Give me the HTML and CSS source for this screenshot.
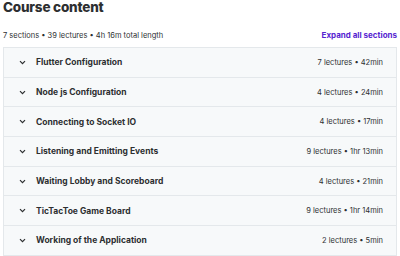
FILE: index.html
```html
<!DOCTYPE html>
<html>
<head>
<meta charset="utf-8">
<link rel="stylesheet" href="styles.css">
</head>
<body>
<div class="page">
  <h2 class="title">Course content</h2>
  <div class="meta">
    <span class="stats">7 sections • 39 lectures • 4h 16m total length</span>
    <span class="expand">Expand all sections</span>
  </div>
  <div class="list">
    <div class="row"><span class="chev"><svg width="7" height="5" viewBox="0 0 7 5"><path d="M1 1.2l2.5 2.5 2.5-2.5" fill="none" stroke="#2d2f31" stroke-width="1.2"/></svg></span><span class="name">Flutter Configuration</span><span class="info">7 lectures • 42min</span></div>
    <div class="row"><span class="chev"><svg width="7" height="5" viewBox="0 0 7 5"><path d="M1 1.2l2.5 2.5 2.5-2.5" fill="none" stroke="#2d2f31" stroke-width="1.2"/></svg></span><span class="name">Node js Configuration</span><span class="info">4 lectures • 24min</span></div>
    <div class="row"><span class="chev"><svg width="7" height="5" viewBox="0 0 7 5"><path d="M1 1.2l2.5 2.5 2.5-2.5" fill="none" stroke="#2d2f31" stroke-width="1.2"/></svg></span><span class="name">Connecting to Socket IO</span><span class="info">4 lectures • 17min</span></div>
    <div class="row"><span class="chev"><svg width="7" height="5" viewBox="0 0 7 5"><path d="M1 1.2l2.5 2.5 2.5-2.5" fill="none" stroke="#2d2f31" stroke-width="1.2"/></svg></span><span class="name">Listening and Emitting Events</span><span class="info">9 lectures • 1hr 13min</span></div>
    <div class="row"><span class="chev"><svg width="7" height="5" viewBox="0 0 7 5"><path d="M1 1.2l2.5 2.5 2.5-2.5" fill="none" stroke="#2d2f31" stroke-width="1.2"/></svg></span><span class="name">Waiting Lobby and Scoreboard</span><span class="info">4 lectures • 21min</span></div>
    <div class="row"><span class="chev"><svg width="7" height="5" viewBox="0 0 7 5"><path d="M1 1.2l2.5 2.5 2.5-2.5" fill="none" stroke="#2d2f31" stroke-width="1.2"/></svg></span><span class="name">TicTacToe Game Board</span><span class="info">9 lectures • 1hr 14min</span></div>
    <div class="row"><span class="chev"><svg width="7" height="5" viewBox="0 0 7 5"><path d="M1 1.2l2.5 2.5 2.5-2.5" fill="none" stroke="#2d2f31" stroke-width="1.2"/></svg></span><span class="name">Working of the Application</span><span class="info">2 lectures • 5min</span></div>
  </div>
</div>
</body>
</html>
```
FILE: styles.css
```css
html, body {
  margin: 0;
  padding: 0;
  background: #fff;
}
body {
  font-family: Inter, "Liberation Sans", sans-serif;
  color: #2d2f31;
  width: 400px;
  height: 256px;
  overflow: hidden;
}
.page {
  padding: 0 3px;
}
.title {
  margin: 0;
  font-size: 13.5px;
  font-weight: 800;
  line-height: 15px;
  letter-spacing: -0.2px;
}
.meta {
  display: flex;
  justify-content: space-between;
  align-items: center;
  margin-top: 14px;
  height: 12px;
}
.stats {
  font-size: 7.5px;
  color: #2d2f31;
}
.expand {
  font-size: 8px;
  font-weight: 700;
  color: #5624d0;
}
.list {
  margin-top: 6px;
  border: 1px solid #e4e8eb;
  border-bottom: none;
}
.row {
  display: flex;
  align-items: center;
  height: 28.7px;
  background: #f7f9fa;
  border-bottom: 1px solid #e4e8eb;
  padding: 0 13px 0 15px;
}
.chev {
  display: flex;
  width: 17px;
}
.name {
  flex: 1;
  font-size: 8.5px;
  font-weight: 700;
}
.info {
  font-size: 7.5px;
  color: #2d2f31;
}
```
